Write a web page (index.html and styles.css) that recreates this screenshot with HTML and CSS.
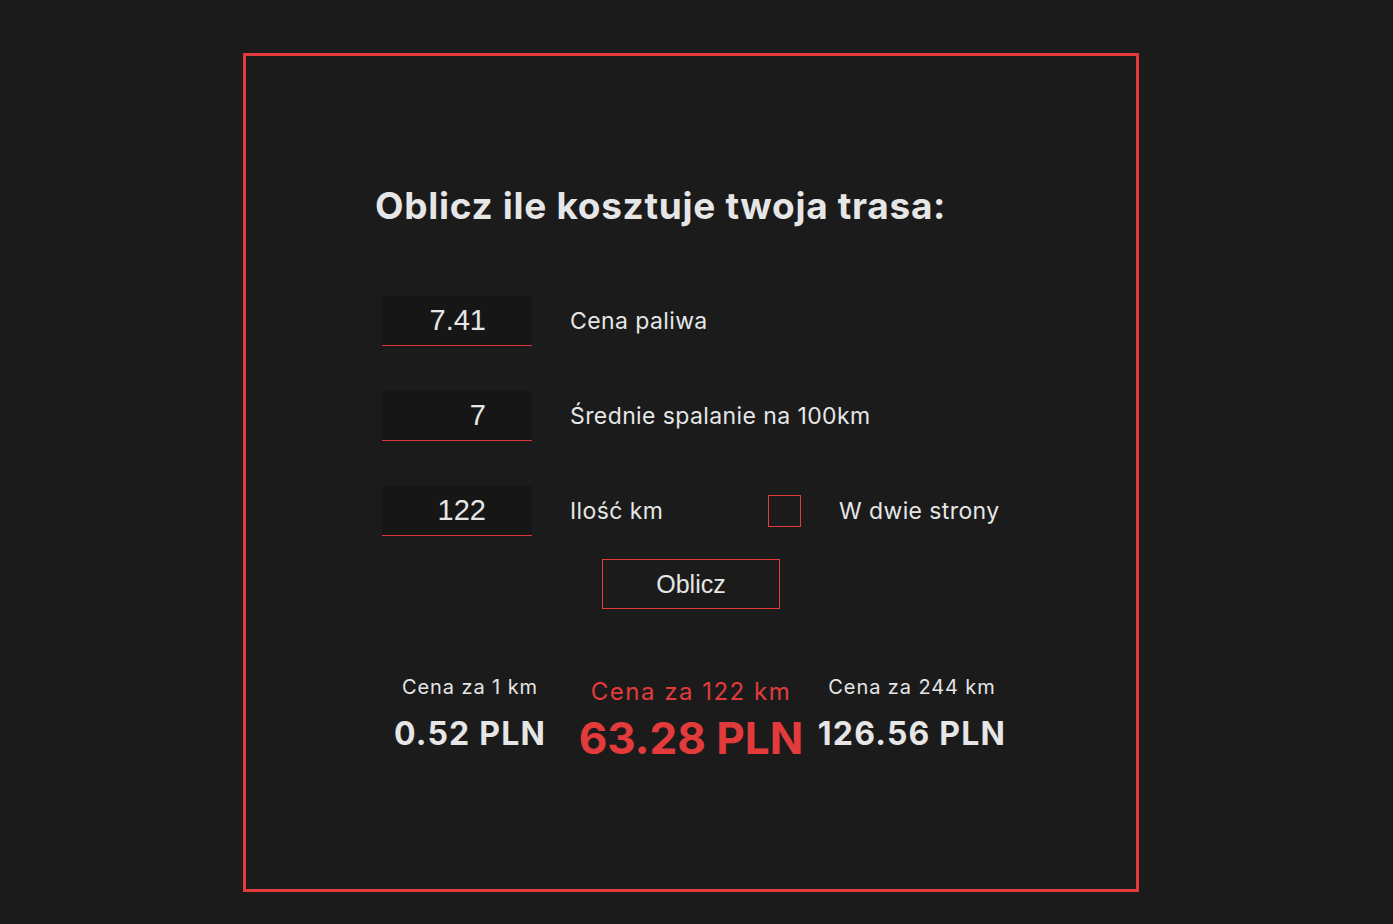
FILE: index.html
```html
<!DOCTYPE html>
<html lang="pl">
<head>
<meta charset="utf-8">
<title>Kalkulator trasy</title>
<link rel="stylesheet" href="styles.css">
</head>
<body>
<div class="card">
  <h1 class="title">Oblicz ile kosztuje twoja trasa:</h1>
  <div class="form">
    <div class="row">
      <input class="num" type="text" value="7.41">
      <span class="label">Cena paliwa</span>
    </div>
    <div class="row">
      <input class="num" type="text" value="7">
      <span class="label">Średnie spalanie na 100km</span>
    </div>
    <div class="row">
      <input class="num num-active" type="text" value="122">
      <span class="label label-km">Ilość km</span>
      <input class="check" type="checkbox">
      <span class="label label-check">W dwie strony</span>
    </div>
  </div>
  <button class="btn" type="button">Oblicz</button>
  <div class="results">
    <div class="col">
      <div class="r-label">Cena za 1 km</div>
      <div class="r-value">0.52 PLN</div>
    </div>
    <div class="col col-main">
      <div class="r-label">Cena za 122 km</div>
      <div class="r-value">63.28 PLN</div>
    </div>
    <div class="col">
      <div class="r-label">Cena za 244 km</div>
      <div class="r-value">126.56 PLN</div>
    </div>
  </div>
</div>
</body>
</html>
```
FILE: styles.css
```css
* { box-sizing: border-box; }
html, body { margin: 0; padding: 0; }
body {
  background: #1b1b1b;
  font-family: Inter, "Open Sans", sans-serif;
  color: #e6e6e6;
  min-height: 924px;
  overflow: hidden;
}
.card {
  margin: 53px 0 0 243px;
  width: 896px;
  height: 839px;
  border: 3px solid #e33b3b;
  padding-top: 128px;
}
.title {
  margin: 0 0 0 129px;
  font-size: 37px;
  line-height: 44px;
  font-weight: 700;
  letter-spacing: 0.7px;
  color: #e6e6e6;
}
.form {
  margin: 68px 0 0 136px;
  display: flex;
  flex-direction: column;
  gap: 45px;
}
.row {
  display: flex;
  align-items: center;
  height: 50px;
}
.num {
  width: 150px;
  height: 50px;
  background: #161616;
  border: none;
  border-bottom: 1px solid #d9363a;
  color: #e6e6e6;
  font-family: "Liberation Sans", Arial, sans-serif;
  font-size: 29px;
  text-align: right;
  padding: 0 46px 0 0;
  outline: none;
}
.label {
  font-size: 23px;
  margin-left: 38px;
  letter-spacing: 0.4px;
  color: #e6e6e6;
}
.label-km { width: 198px; flex: none; }
.check {
  appearance: none;
  -webkit-appearance: none;
  margin: 0;
  width: 33px;
  height: 32px;
  border: 1px solid #e33b3b;
  background: transparent;
}
.label-check { margin-left: 38px; }
.btn {
  display: block;
  margin: 23px auto 0;
  width: 178px;
  height: 50px;
  background: #1b1b1b;
  border: 1px solid #e33b3b;
  color: #e6e6e6;
  font-family: "Liberation Sans", Arial, sans-serif;
  font-size: 25px;
  padding: 0;
}
.results {
  margin-top: 66px;
  display: grid;
  grid-template-columns: 221px 221px 221px;
  justify-content: center;
}
.col {
  display: flex;
  flex-direction: column;
  align-items: center;
  white-space: nowrap;
}
.r-label {
  font-size: 20px;
  line-height: 24px;
  letter-spacing: 0.9px;
}
.r-value {
  font-size: 32px;
  line-height: 38px;
  font-weight: 700;
  letter-spacing: 1.2px;
  margin-top: 16px;
}
.col-main { padding-top: 3px; color: #e33b3b; }
.col-main .r-label { font-size: 24px; line-height: 28px; letter-spacing: 1.5px; }
.col-main .r-value { font-size: 44px; line-height: 50px; letter-spacing: 0; margin-top: 7px; }
```
